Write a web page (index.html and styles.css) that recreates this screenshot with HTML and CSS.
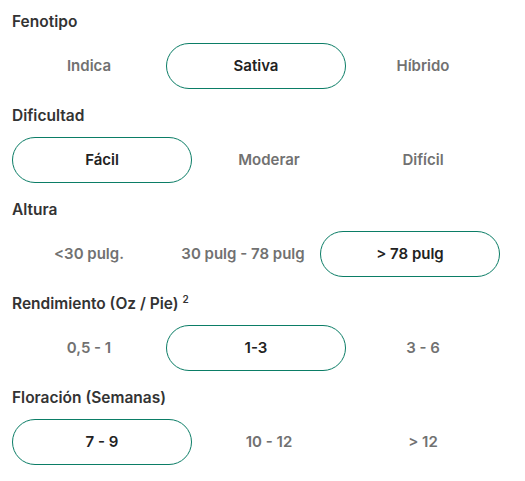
FILE: index.html
```html
<!DOCTYPE html>
<html lang="es">
<head>
  <meta charset="utf-8" />
  <meta name="viewport" content="width=device-width, initial-scale=1.0" />
  <title>Filtros</title>
  <link rel="stylesheet" href="styles.css">
</head>
<body>
  <div class="section">
    <p class="label">Fenotipo</p>
    <div class="options">
      <button class="opt">Indica</button>
      <button class="opt active">Sativa</button>
      <button class="opt">Híbrido</button>
    </div>
  </div>

  <div class="section">
    <p class="label">Dificultad</p>
    <div class="options">
      <button class="opt active">Fácil</button>
      <button class="opt">Moderar</button>
      <button class="opt">Difícil</button>
    </div>
  </div>

  <div class="section">
    <p class="label">Altura</p>
    <div class="options">
      <button class="opt">&lt;30 pulg.</button>
      <button class="opt">30 pulg - 78 pulg</button>
      <button class="opt active">&gt; 78 pulg</button>
    </div>
  </div>

  <div class="section">
    <p class="label">Rendimiento (Oz / Pie) <sup>2</sup></p>
    <div class="options">
      <button class="opt">0,5 - 1</button>
      <button class="opt active">1-3</button>
      <button class="opt">3 - 6</button>
    </div>
  </div>

  <div class="section">
    <p class="label">Floración (Semanas)</p>
    <div class="options">
      <button class="opt active">7 - 9</button>
      <button class="opt">10 - 12</button>
      <button class="opt">&gt; 12</button>
    </div>
  </div>
</body>
</html>
```

FILE: styles.css
```css
body {
  font-family: Inter, "Liberation Sans", sans-serif;
  margin: 0;
  padding: 12px;
  background: #fff;
  color: #2b2b2b;
}

.section {
  margin-bottom: 17px;
}

.label {
  margin: 0;
  font-size: 15.5px;
  line-height: 20px;
  font-weight: 600;
  color: #333;
}

.label sup {
  font-size: 10px;
  line-height: 0;
}

.options {
  display: flex;
  margin-top: 11px;
}

.opt {
  width: 154px;
  height: 46px;
  padding: 0 0 2px;
  border: 1px solid transparent;
  border-radius: 23px;
  background: none;
  font-family: inherit;
  font-size: 15px;
  font-weight: 600;
  color: #717171;
}

.opt.active {
  width: 180px;
  border-color: #0b7d66;
  color: #222;
}
```
